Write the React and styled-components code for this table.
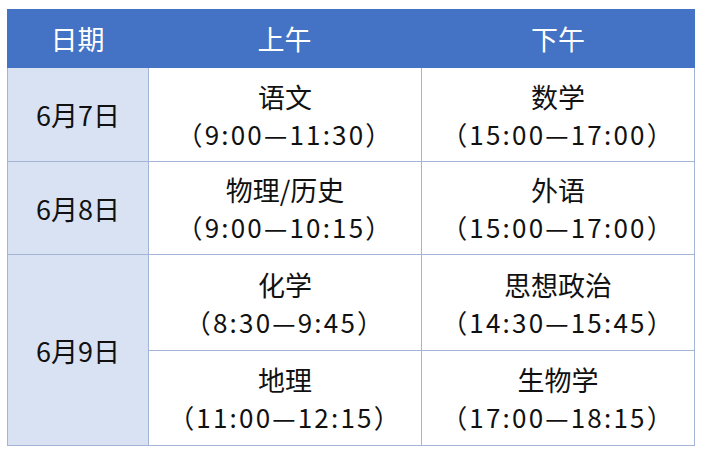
import React from 'react';
import styled, { createGlobalStyle } from 'styled-components';

const GlobalStyle = createGlobalStyle`
    html, body {
        margin: 0;
        padding: 0;
        background: #fff;
    }
    body {
        font-family: "Noto Sans CJK SC", "Noto Sans", sans-serif;
        color: #111;
    }
`

const Page = styled.div`
    padding: 9px 0 0 7px;
`

const Table = styled.div`
    width: 688px;
`

const Head = styled.div`
    display: grid;
    grid-template-columns: 141px 273px 274px;
    height: 59px;
    background: #4472c4;
`

const Th = styled.div`
    display: flex;
    align-items: center;
    justify-content: center;
    color: #fff;
    font-size: 27px;
`

const Body = styled.div`
    display: grid;
    grid-template-columns: 140px 272px 272px;
    grid-template-rows: 93px 92px 95px 94px;
    gap: 1px;
    background: #a3b4d6;
    border: 1px solid #a3b4d6;
    border-top: none;
`

const DateCell = styled.div`
    display: flex;
    align-items: center;
    justify-content: center;
    background: #d9e2f3;
    font-size: 27px;
    grid-row: ${p => p.span ? `span ${p.span}` : 'auto'};
`

const Cell = styled.div`
    display: flex;
    flex-direction: column;
    align-items: center;
    justify-content: center;
    background: #fff;
    font-size: 26px;
    line-height: 37px;
`

const Subject = styled.div`
    font-size: 27px;
`

const Time = styled.div`
    letter-spacing: 2.2px;
`

const rows = [
    { date: '6月7日', am: ['语文', '（9:00—11:30）'], pm: ['数学', '（15:00—17:00）'] },
    { date: '6月8日', am: ['物理/历史', '（9:00—10:15）'], pm: ['外语', '（15:00—17:00）'] },
    { date: '6月9日', span: 2, am: ['化学', '（8:30—9:45）'], pm: ['思想政治', '（14:30—15:45）'] },
    { am: ['地理', '（11:00—12:15）'], pm: ['生物学', '（17:00—18:15）'] },
]

const Slot = ({ item }) => (
    <Cell>
        <Subject>{item[0]}</Subject>
        <Time>{item[1]}</Time>
    </Cell>
)

export default function App() {
    return (
        <Page>
            <GlobalStyle />
            <Table>
                <Head>
                    <Th>日期</Th>
                    <Th>上午</Th>
                    <Th>下午</Th>
                </Head>
                <Body>
                    {rows.map((r, i) => (
                        <React.Fragment key={i}>
                            {r.date && <DateCell span={r.span}>{r.date}</DateCell>}
                            <Slot item={r.am} />
                            <Slot item={r.pm} />
                        </React.Fragment>
                    ))}
                </Body>
            </Table>
        </Page>
    );
}
